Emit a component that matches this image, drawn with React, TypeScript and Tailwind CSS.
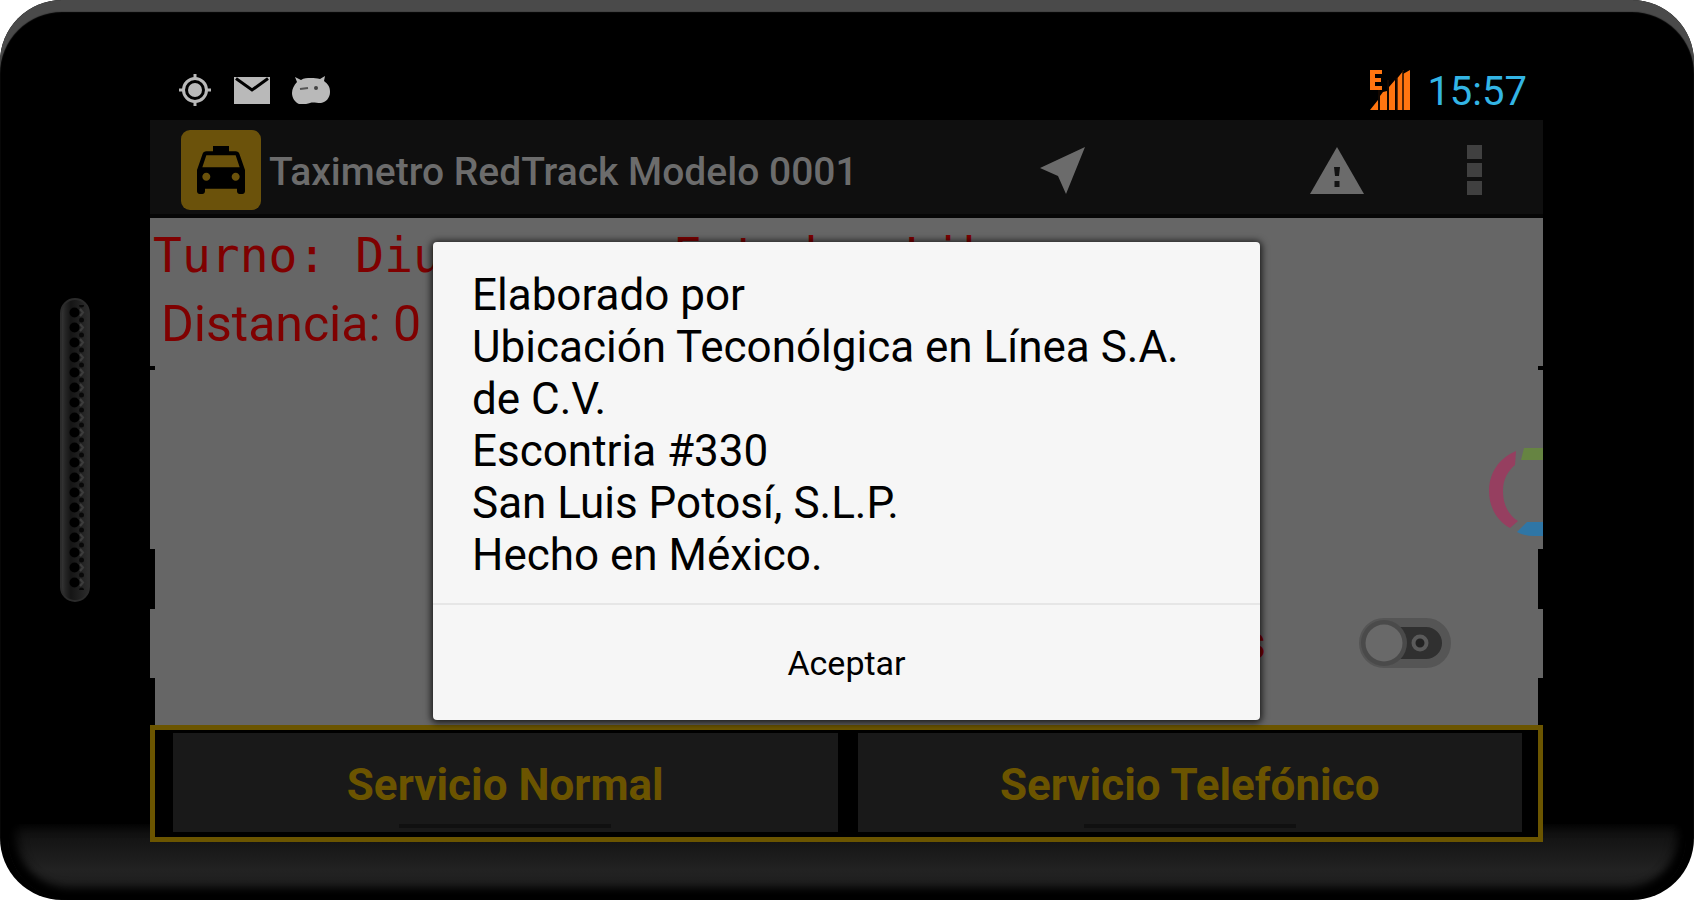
import React from "react";
import { MdLocalTaxi } from "react-icons/md";

function LocationIcon() {
  return (
    <svg viewBox="0 0 34 34" className="size-[34px]" aria-hidden="true">
      <circle cx="17" cy="17" r="11.5" fill="none" stroke="#b9b9b9" strokeWidth="3" />
      <circle cx="17" cy="17" r="7" fill="#b9b9b9" />
      <path d="M17 1v5M17 28v5M1 17h5M28 17h5" stroke="#b9b9b9" strokeWidth="3" />
    </svg>
  );
}

function MailIcon() {
  return (
    <svg viewBox="0 0 36 27" className="h-[27px] w-9" aria-hidden="true">
      <path d="M0 0h36v27H0z" fill="#b9b9b9" />
      <path d="M2 1.500L18 13L34 1.500" fill="none" stroke="#000" strokeWidth="3" />
    </svg>
  );
}

function AndroidIcon() {
  return (
    <svg viewBox="0 0 38 28" className="h-[28px] w-[38px]" aria-hidden="true">
      <path
        d="M3 1l6 3c3-2 6-2 10-2 3 0 6 0 9 1l5-3-1 5c4 3 6 6 6 11 0 6-4 10-9 11-5 0-8-1-11 0-3 1-8 2-11 1-4-2-7-6-7-11 0-4 2-8 5-11z"
        fill="#b9b9b9"
      />
      <path d="M8 13l8-1" fill="none" stroke="#555" strokeWidth="2" />
      <circle cx="24" cy="12" r="2" fill="#444" />
    </svg>
  );
}

function SignalIcon() {
  return (
    <svg viewBox="0 0 42 40" className="h-10 w-[42px]" aria-label="Señal E" role="img">
      <path d="M1 0h12v4H6v4h6v4H6v4h7v4H1z" fill="#ff7510" />
      <path
        d="M1 40L9 30v10zM11 40V26l3-4 4-1v19zM20 40V17l6-7v30zM28.500 40V8L35 0h-1v40zM34 40V4l7-4v40z"
        fill="#ff7510"
      />
      <path d="M10 20v20M19 10v30M27.500 8v32M34 0v40" stroke="#1a0a00" strokeWidth="1.500" />
    </svg>
  );
}

function StatusBar() {
  return (
    <div className="flex h-[60px] items-center justify-between pr-4 pl-7">
      <div className="flex items-center gap-[22px]">
        <LocationIcon />
        <MailIcon />
        <AndroidIcon />
      </div>
      <div className="flex items-center gap-4">
        <SignalIcon />
        <time className="pt-1 text-[40px] leading-[60px] text-[#33b5e5]">15:57</time>
      </div>
    </div>
  );
}

function AppBar() {
  return (
    <header className="flex h-[98px] shrink-0 items-center border-b-4 border-[#060606] bg-[#0f0f0f] pt-1.5 pr-[61px] pl-[31px]">
      <div className="flex size-20 items-center justify-center rounded-[9px] bg-[#6b520b]">
        <MdLocalTaxi className="size-[64px] text-black" />
      </div>
      <h1 className="ml-2 flex-1 pt-1 text-[39px] leading-[48px] font-medium whitespace-nowrap text-[#6c6c6c]">
        Taximetro RedTrack Modelo 0001
      </h1>
      <div className="flex items-center">
        <button type="button" aria-label="Navegar" className="mr-[225px]">
          <svg viewBox="0 0 45 47" className="h-[47px] w-[45px]">
            <path d="M45 0L0 21L18 29L26 47z" fill="#6b6b6b" />
          </svg>
        </button>
        <button type="button" aria-label="Alerta" className="mr-[103px]">
          <svg viewBox="0 0 54 47" className="h-[47px] w-[54px]">
            <path d="M27 0L54 47H0z" fill="#6b6b6b" />
            <path d="M24 20h6l-1 9h-4zM24.500 34h5v6h-5z" fill="#131313" />
          </svg>
        </button>
        <button type="button" aria-label="Más opciones" className="flex flex-col gap-1">
          <span className="h-3.5 w-[15px] bg-[#404040]" />
          <span className="h-3.5 w-[15px] bg-[#404040]" />
          <span className="h-3.5 w-[15px] bg-[#404040]" />
        </button>
      </div>
    </header>
  );
}

function EdgeNotches({ side }: { side: "left" | "right" }) {
  return (
    <div
      aria-hidden="true"
      className={
        side === "left"
          ? "absolute inset-y-0 left-0 flex w-[5px] flex-col"
          : "absolute inset-y-0 right-0 flex w-[5px] flex-col"
      }
    >
      <span className="grow-[148]" />
      <span className="h-1 bg-black" />
      <span className="grow-[179]" />
      <span className="grow-[60] bg-black" />
      <span className="grow-[69]" />
      <span className="grow-[47] bg-black" />
    </div>
  );
}

function Meter() {
  return (
    <main className="relative flex flex-1 flex-col bg-[#666666] pt-0.5 pb-[57px] text-[#7f0000]">
      <p className="overflow-hidden pl-[3px] font-['DejaVu_Sans_Mono',monospace] text-[48px] leading-[70px] whitespace-pre">
        {"Turno: Diurno     Estado: Libre"}
      </p>
      <p className="pl-[11px] text-[50px] leading-[68px]">Distancia: 0</p>
      <svg viewBox="0 0 54 90" className="mt-[88px] h-[90px] w-[54px] self-end" aria-hidden="true">
        <path d="M27 5C10 12 0 27 0 45C0 61 8 75 21 82L29 75C19 69 14 58 14 45C14 33 19 25 26 19z" fill="#963f60" />
        <path d="M35 2H54V14H32z" fill="#668442" />
        <path d="M28 86L38 76H54V90H45Q35 90 28 86z" fill="#2f76a6" />
      </svg>
      <div className="mt-auto flex items-center justify-end gap-[93px] pr-[92px]">
        <label htmlFor="extras" className="text-[48px] leading-[50px]">
          Extras
        </label>
        <div className="relative h-[50px] w-[92px]">
          <input
            id="extras"
            type="checkbox"
            className="h-[50px] w-[92px] appearance-none rounded-full border-[9px] border-[#555555] bg-[#303030]"
          />
          <svg viewBox="0 0 92 50" className="pointer-events-none absolute inset-0" aria-hidden="true">
            <circle cx="25" cy="25" r="23" fill="#4a4a4a" />
            <circle cx="25" cy="25" r="18.500" fill="#696969" />
            <circle cx="61" cy="25" r="6.500" fill="#222" stroke="#5a5a5a" strokeWidth="4" />
          </svg>
        </div>
      </div>
      <EdgeNotches side="left" />
      <EdgeNotches side="right" />
    </main>
  );
}

function ServiceButton({ children }: { children: React.ReactNode }) {
  return (
    <button
      type="button"
      className="flex h-[99px] flex-1 flex-col items-center bg-[#191919] text-[44px] font-bold text-[#6b5400]"
    >
      <span className="h-[91px] leading-[104px]">{children}</span>
      <span className="h-1 w-[212px] bg-[#101010]" />
    </button>
  );
}

function AboutDialog() {
  return (
    <div className="absolute inset-0 flex items-center justify-center">
      <section
        role="dialog"
        aria-modal="true"
        aria-label="Acerca de"
        className="flex w-[827px] flex-col rounded-[4px] bg-[#f6f6f6] text-black shadow-[0_1px_7px_2px_rgba(0,0,0,0.75)]"
      >
        <p className="px-[39px] pt-[27px] pb-[22px] text-[44px] leading-[52px]">
          Elaborado por
          <br />
          Ubicación Teconólgica en Línea S.A. de C.V.
          <br />
          Escontria #330
          <br />
          San Luis Potosí, S.L.P.
          <br />
          Hecho en México.
        </p>
        <button
          type="button"
          className="h-[117px] border-t-2 border-[#e6e6e6] text-[34px] leading-10"
        >
          Aceptar
        </button>
      </section>
    </div>
  );
}

function Speaker() {
  return (
    <svg viewBox="0 0 30 304" className="h-[304px] w-[30px]" aria-hidden="true">
      <defs>
        <linearGradient id="grille" x1="0" x2="1">
          <stop offset="0" stopColor="#383838" />
          <stop offset="0.150" stopColor="#262626" />
          <stop offset="0.350" stopColor="#151515" />
          <stop offset="1" stopColor="#2c2c2c" />
        </linearGradient>
        <pattern id="holes" x="0" y="7" width="30" height="15" patternUnits="userSpaceOnUse">
          <circle cx="14.500" cy="7.500" r="5" fill="#000" />
          <circle cx="21.500" cy="0" r="2.500" fill="#080808" />
          <circle cx="21.500" cy="15" r="2.500" fill="#080808" />
          <path d="M20 4l3 3.500-3 3.500" fill="none" stroke="#3c3c3c" strokeWidth="2" />
        </pattern>
      </defs>
      <rect x="1" y="1" width="28" height="302" rx="14" fill="url(#grille)" stroke="#2b2b2b" strokeWidth="2" />
      <rect x="0" y="7" width="30" height="285" fill="url(#holes)" />
    </svg>
  );
}

export default function App() {
  return (
    <div className="min-h-screen bg-white font-[Roboto,sans-serif]">
      <div className="relative flex min-h-screen overflow-hidden rounded-[62px] bg-black shadow-[inset_0_12px_1px_#4a4a4a]">
        <div
          aria-hidden="true"
          className="absolute inset-x-2 bottom-0 h-[76px] rounded-b-[62px] bg-linear-to-b from-[#0e0e0e] via-[#222222] via-60% to-[#1c1c1c] shadow-[inset_0_-12px_10px_#000,inset_8px_0_12px_#000,inset_-8px_0_12px_#000]"
        />
        <div className="flex w-[150px] shrink-0 items-center pl-[60px]">
          <Speaker />
        </div>
        <div className="relative flex min-w-0 flex-1 flex-col pt-[60px] pb-[58px]">
          <StatusBar />
          <div className="relative flex flex-1 flex-col">
            <AppBar />
            <Meter />
            <footer className="flex gap-5 border-[5px] border-[#6b5500] bg-black pt-[3px] pr-4 pb-[5px] pl-[18px]">
              <ServiceButton>Servicio Normal</ServiceButton>
              <ServiceButton>Servicio Telefónico</ServiceButton>
            </footer>
            <AboutDialog />
          </div>
        </div>
        <div className="w-[151px] shrink-0" />
      </div>
    </div>
  );
}
